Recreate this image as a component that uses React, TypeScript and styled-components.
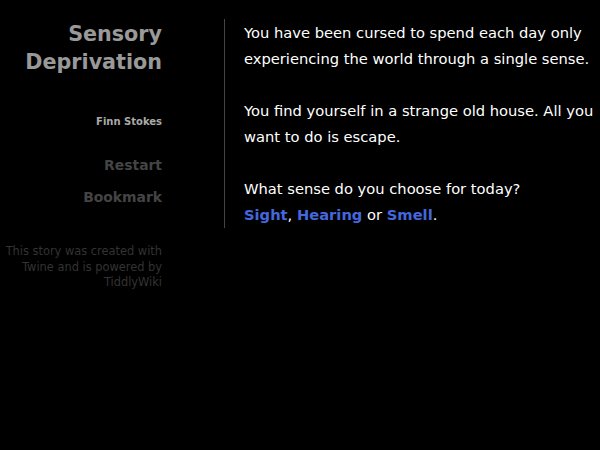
import styled, { createGlobalStyle } from "styled-components";

const GlobalStyle = createGlobalStyle`
  html, body {
    margin: 0;
    padding: 0;
    background: #000;
    color: #fff;
    font-family: "DejaVu Sans", Verdana, sans-serif;
  }
`;

const Page = styled.div`
  display: flex;
  align-items: flex-start;
  width: 600px;
  height: 450px;
  background: #000;
  overflow: hidden;
`;

const Sidebar = styled.div`
  display: flex;
  flex-direction: column;
  align-items: flex-end;
  width: 162px;
  flex: none;
  text-align: right;
  padding-top: 20px;
`;

const StoryTitle = styled.h1`
  margin: 0;
  color: #999;
  font-size: 20.7px;
  font-weight: bold;
  line-height: 28px;
`;

const Author = styled.div`
  margin-top: 40px;
  color: #aaa;
  font-size: 10px;
  font-weight: bold;
`;

const Menu = styled.ul`
  list-style: none;
  margin: 29px 0 0;
  padding: 0;
  display: flex;
  flex-direction: column;
  align-items: flex-end;
  gap: 14px;
`;

const MenuItem = styled.li`
  color: #444;
  font-size: 13.9px;
  font-weight: bold;
  line-height: 18px;
`;

const Credits = styled.div`
  margin-top: 38px;
  width: 162px;
  color: #333;
  font-size: 11.4px;
  line-height: 15.5px;
`;

const Passages = styled.div`
  margin: 19px 0 0 62px;
  padding: 1px 0 0 19px;
  border-left: 1px solid #444;
`;

const Passage = styled.div`
  font-size: 14.7px;
  line-height: 26px;
  color: #fff;
`;

const Link = styled.a`
  color: #4467dd;
  font-weight: bold;
  text-decoration: none;
`;

export default function App() {
  return (
    <>
      <GlobalStyle />
      <Page>
        <Sidebar>
          <StoryTitle>
            Sensory
            <br />
            Deprivation
          </StoryTitle>
          <Author>Finn Stokes</Author>
          <Menu>
            <MenuItem>Restart</MenuItem>
            <MenuItem>Bookmark</MenuItem>
          </Menu>
          <Credits>
            This story was created with Twine and is powered by TiddlyWiki
          </Credits>
        </Sidebar>
        <Passages>
          <Passage>
            You have been cursed to spend each day only experiencing the world
            through a single sense.
            <br />
            <br />
            You find yourself in a strange old house. All you want to do is
            escape.
            <br />
            <br />
            What sense do you choose for today?
            <br />
            <Link>Sight</Link>, <Link>Hearing</Link> or <Link>Smell</Link>.
          </Passage>
        </Passages>
      </Page>
    </>
  );
}
